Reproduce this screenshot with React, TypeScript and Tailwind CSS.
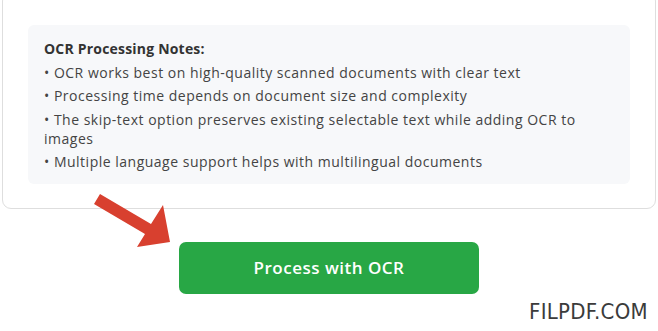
export default function App() {
  const notes = [
    "OCR works best on high-quality scanned documents with clear text",
    "Processing time depends on document size and complexity",
    "The skip-text option preserves existing selectable text while adding OCR to images",
    "Multiple language support helps with multilingual documents",
  ];

  return (
    <div className="relative w-[658px] h-[331px] bg-white overflow-hidden font-['Open_Sans',sans-serif]">
      {/* card (top is cut off) */}
      <div className="ml-[2px] mr-[2px] -mt-[8px] pt-[32px] pb-[24px] px-[25px] border border-[#dedede] rounded-[9px] bg-white">
        <div className="bg-[#f7f8fa] rounded-[6px] pl-[16px] pr-[16px] pt-[14px] pb-[13px]">
          <h3 className="text-[14px] leading-[20px] font-bold tracking-[0.2px] text-[#333333]">
            OCR Processing Notes:
          </h3>
          <ul className="mt-[3.5px] space-y-[4.5px]">
            {notes.map((note, i) => (
              <li
                key={i}
                className="text-[14px] leading-[19px] tracking-[0.5px] text-[#444444]"
              >
                • {note}
              </li>
            ))}
          </ul>
        </div>
      </div>

      <div className="flex justify-center mt-[33px]">
        <button className="w-[300px] h-[52px] rounded-[7px] bg-[#28a745] text-white text-[17px] tracking-[0.5px] font-semibold">
          Process with OCR
        </button>
      </div>

      {/* red pointer arrow */}
      <svg
        className="absolute left-0 top-0"
        width="658"
        height="331"
        viewBox="0 0 658 331"
      >
        <polygon
          points="100,194 151,224 163,205 170,242 137,247 145,234 94,204"
          fill="#d8402f"
        />
      </svg>

      <div className="absolute right-[10px] bottom-[8px] text-[22px] leading-none tracking-[0.3px] text-[#3b3b3b] font-['DejaVu_Sans_Condensed','DejaVu_Sans',sans-serif] [font-stretch:condensed]">
        FILPDF.COM
      </div>
    </div>
  );
}
